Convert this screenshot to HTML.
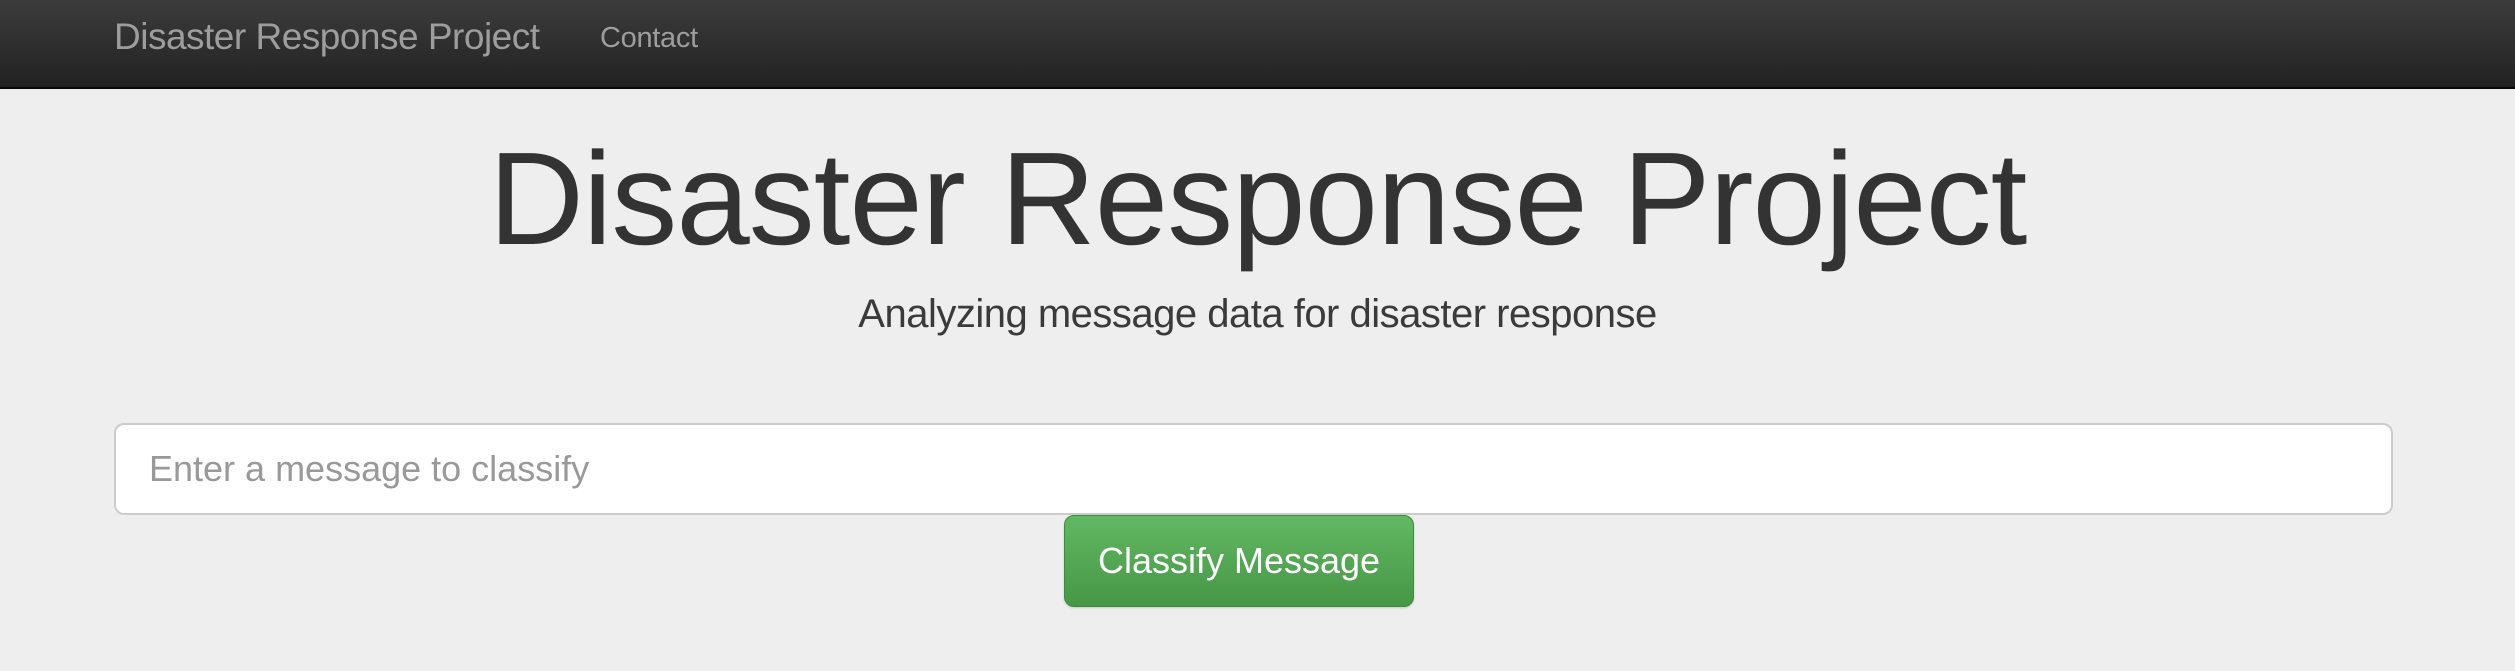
<!DOCTYPE html>
<html><head><style>
html,body{margin:0;padding:0;width:2515px;height:671px;background:#eeeeee;overflow:hidden;font-family:"Liberation Sans",Arial,sans-serif}
.nav{position:absolute;left:0;top:0;width:2515px;height:87px;background:linear-gradient(#3c3c3c,#222);border-bottom:2px solid #080808}
.brand{position:absolute;left:114px;top:15px;font-size:37px;line-height:44px;color:#9d9d9d;letter-spacing:-0.5px}
.contact{position:absolute;left:600px;top:20px;font-size:29px;line-height:36px;color:#9d9d9d;letter-spacing:-0.3px}
h1{position:absolute;left:0;width:2515px;top:124px;margin:0;text-align:center;font-size:132px;font-weight:normal;color:#333;letter-spacing:-1px;line-height:150px}
.sub{position:absolute;left:0;width:2515px;top:292px;text-align:center;font-size:40px;color:#3a3a3a;letter-spacing:-0.5px}
.inp{position:absolute;left:114px;top:423px;width:2275px;height:88px;border:2px solid #ccc;border-radius:10px;background:#fff}
.inp span{position:absolute;left:33px;top:23px;font-size:36px;color:#999}
.btn{position:absolute;left:1064px;top:515px;width:348px;height:90px;border:1px solid #3d8b3d;border-radius:10px;background:linear-gradient(#62b862,#469746);color:#fff;font-size:36px;text-align:center;line-height:90px;box-shadow:0 1px 2px rgba(0,0,0,.15)}
</style></head><body>
<div class="nav"><div class="brand">Disaster Response Project</div><div class="contact">Contact</div></div>
<h1>Disaster Response Project</h1>
<div class="sub">Analyzing message data for disaster response</div>
<div class="inp"><span>Enter a message to classify</span></div>
<div class="btn">Classify Message</div>
</body></html>
